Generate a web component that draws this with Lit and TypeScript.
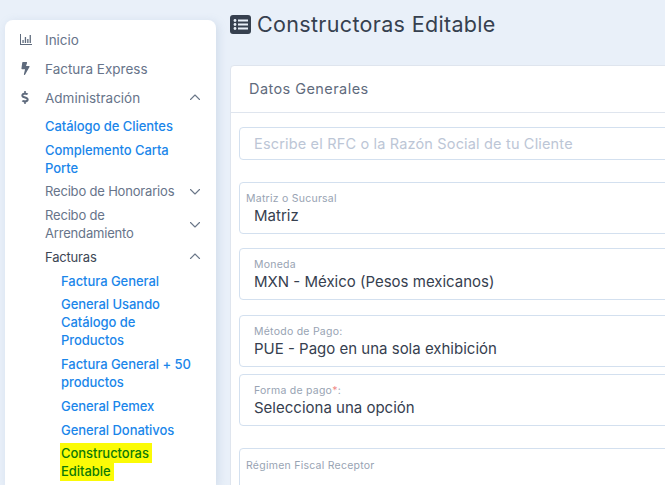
import { LitElement, html, css } from "lit";
import { customElement } from "lit/decorators.js";

const chev = (up: boolean) => html`<svg class="chev ${up ? "up" : "down"}" viewBox="0 0 12 8" width="12" height="8" fill="none" stroke="currentColor" stroke-width="1.1" stroke-linecap="round" stroke-linejoin="round"><path d=${up ? "M1.5 6.5 6 2l4.5 4.5" : "M1.5 1.5 6 6l4.5-4.5"}></path></svg>`;

@customElement("app-root")
export class AppRoot extends LitElement {
  static styles = css`
    :host { display: block; width: 665px; height: 485px; overflow: hidden; background: #e9f0f9; font-family: Inter, "Liberation Sans", sans-serif; }
    .page { display: flex; align-items: flex-start; padding-left: 5px; }
    .side { flex: none; width: 211px; height: 465px; box-sizing: border-box; margin-top: 20px; padding: 5px 0 0 0; background: #fff; border-radius: 8px 8px 0 0; box-shadow: 2px 2px 10px rgba(120,145,180,.22); overflow: hidden; }
    .top { display: flex; align-items: center; height: 29px; color: #67748a; font-size: 13.5px; padding-left: 14px; padding-right: 15px; }
    .ico { width: 12px; height: 14px; margin-right: 14px; flex: none; display: flex; justify-content: center; align-items: center; }
    .chart { margin-left: 2px; flex: none; }
    .top .label { flex: 1; }
    .chev { flex: none; color: #6b7789; }
    .chev.up { margin-top: -2px; }
    .chev.down { margin-top: 2px; }
    .sub { margin-top: -1px; padding-left: 40px; padding-right: 15px; font-size: 13px; line-height: 18px; font-weight: 500; }
    .link { color: #1a86ea; margin-top: 5.75px; letter-spacing: -.05px; }
    .group { display: flex; align-items: center; color: #67748a; font-weight: 400; margin-top: 5.75px; letter-spacing: -.18px; }
    .group .label { flex: 1; }
    .group.open { color: #3d4654; }
    .deep { padding-left: 16px; }
    .hl { background: #fbfb06; color: #0d7a06; padding: 2px 3px 2px 1px; margin-left: -1px; -webkit-box-decoration-break: clone; box-decoration-break: clone; }
    .main { flex: none; width: 520px; margin-left: 14px; }
    h1 { display: flex; align-items: center; gap: 6px; margin: 9px 0 0; height: 30px; font-size: 21.5px; font-weight: 400; color: #36404f; letter-spacing: .33px; white-space: nowrap; }
    .card { margin-top: 26px; background: #fff; border: 1px solid #dfe5ee; border-radius: 4px 0 0 4px; padding-bottom: 40px; }
    .head { height: 45px; padding: 0 0 1px 18px; display: flex; align-items: center; border-bottom: 1px solid #dfe5ee; font-size: 14.5px; color: #5f6b7d; letter-spacing: .43px; }
    .body { padding: 14px 0 0 8px; }
    .box { border: 1px solid #d3e0ef; border-radius: 4px; box-sizing: border-box; padding-left: 14px; }
    .search { height: 33px; padding-bottom: 1px; display: flex; align-items: center; font-size: 14.5px; color: #bcc6d6; letter-spacing: .17px; }
    .f { height: 52px; padding-top: 9px; }
    .l { font-size: 10.5px; line-height: 14px; color: #98a3b3; letter-spacing: .25px; }
    .l.in { margin-left: -8px; }
    .v { font-size: 15px; line-height: 20px; color: #36404f; }
    .req { color: #f08a8a; }
    .m1 { margin-top: 22px; } .m2 { margin-top: 14px; } .m3 { margin-top: 15px; } .m4 { margin-top: 7px; } .m5 { margin-top: 22px; padding-top: 10px; height: 80px; }
  `;
  render() {
    return html`<div class="page">
      <aside class="side">
        <div class="top"><span class="ico"><svg class="chart" width="12" height="11" viewBox="0 0 12 11" fill="#5f6b7d"><path d="M0 0h1v10h11v1H0z"></path><rect x="2.400" y="6" width="1.300" height="3"></rect><rect x="4.800" y="3" width="1.300" height="6"></rect><rect x="7.200" y="5" width="1.300" height="4"></rect><rect x="9.600" y="1" width="1.300" height="8"></rect></svg></span><span class="label">Inicio</span></div>
        <div class="top"><span class="ico"><svg width="9" height="13" viewBox="0 0 320 512" fill="#5f6b7d"><path d="M296 160H180.6l42.6-129.8C227.2 15 215.7 0 200 0H56C44 0 33.8 8.9 32.2 20.8l-32 240C-1.7 275.2 9.5 288 24 288h118.7L96.6 482.5c-3.6 15.2 8 29.5 23.3 29.5 8.4 0 16.4-4.4 20.8-12l176-304c9.3-15.9-2.2-36-20.7-36z"></path></svg></span><span class="label">Factura Express</span></div>
        <div class="top"><span class="ico"><svg width="8" height="13" viewBox="0 0 288 512" fill="#5f6b7d"><path d="M209.2 233.4l-108-31.6C88.7 198.2 80 186.5 80 173.5c0-16.3 13.2-29.5 29.5-29.5h66.3c12.2 0 24.2 3.7 34.2 10.5 6.1 4.1 14.3 3.1 19.5-2l34.8-34c7.1-6.9 6.1-18.4-1.8-24.5C238 74.8 207.4 64.1 176 64V16c0-8.8-7.2-16-16-16h-32c-8.8 0-16 7.2-16 16v48h-2.500C45.800 64-5.400 118.700.500 183.600c4.200 46.100 39.400 83.600 83.800 96.600l102.500 30c12.500 3.700 21.200 15.300 21.200 28.300 0 16.300-13.200 29.500-29.500 29.500h-66.300C100 368 88 364.300 78 357.500c-6.100-4.100-14.300-3.100-19.500 2l-34.800 34c-7.100 6.900-6.100 18.400 1.800 24.500 24.500 19.200 55.100 29.900 86.500 30v48c0 8.800 7.200 16 16 16h32c8.800 0 16-7.200 16-16v-48.200c46.600-.9 90.300-28.600 105.700-72.700 21.500-61.600-14.600-124.800-72.500-141.700z"></path></svg></span><span class="label">Administración</span>${chev(true)}</div>
        <div class="sub">
          <div class="link">Catálogo de Clientes</div>
          <div class="link">Complemento Carta Porte</div>
          <div class="group"><span class="label">Recibo de Honorarios</span>${chev(false)}</div>
          <div class="group"><span class="label">Recibo de<br>Arrendamiento</span>${chev(false)}</div>
          <div class="group open"><span class="label">Facturas</span>${chev(true)}</div>
          <div class="deep">
            <div class="link">Factura General</div>
            <div class="link">General Usando Catálogo de Productos</div>
            <div class="link">Factura General + 50 productos</div>
            <div class="link">General Pemex</div>
            <div class="link">General Donativos</div>
            <div class="link"><span class="hl">Constructoras<br>Editable</span></div>
          </div>
        </div>
      </aside>
      <main class="main">
        <h1><svg width="21" height="19" viewBox="0 0 21 19"><rect width="21" height="19" rx="3" fill="#36404f"></rect><g fill="#e9f0f9"><circle cx="5" cy="5.500" r="1.400"></circle><circle cx="5" cy="9.500" r="1.400"></circle><circle cx="5" cy="13.500" r="1.400"></circle><rect x="8" y="4.500" width="10" height="2"></rect><rect x="8" y="8.500" width="10" height="2"></rect><rect x="8" y="12.500" width="10" height="2"></rect></g></svg>Constructoras Editable</h1>
        <section class="card">
          <div class="head">Datos Generales</div>
          <div class="body">
            <div class="box search">Escribe el RFC o la Razón Social de tu Cliente</div>
            <div class="box f m1"><div class="l in">Matriz o Sucursal</div><div class="v">Matriz</div></div>
            <div class="box f m2"><div class="l">Moneda</div><div class="v">MXN - México (Pesos mexicanos)</div></div>
            <div class="box f m3"><div class="l">Método de Pago:</div><div class="v">PUE - Pago en una sola exhibición</div></div>
            <div class="box f m4"><div class="l">Forma de pago<span class="req">*</span>:</div><div class="v">Selecciona una opción</div></div>
            <div class="box f m5"><div class="l in">Régimen Fiscal Receptor</div></div>
          </div>
        </section>
      </main>
    </div>`;
  }
}
